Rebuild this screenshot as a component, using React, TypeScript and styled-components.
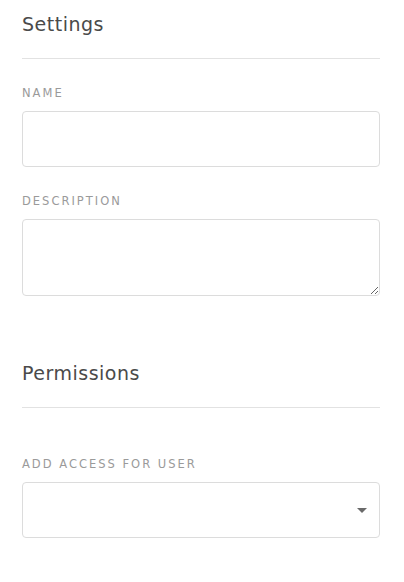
import styled, { createGlobalStyle } from "styled-components";

const GlobalStyle = createGlobalStyle`
  html, body {
    margin: 0;
    padding: 0;
    background: #ffffff;
  }
  body {
    font-family: "DejaVu Sans", "Noto Sans", sans-serif;
  }
`;

const Page = styled.div`
  padding: 12px 24px 40px 22px;
  width: 358px;
`;

const Section = styled.section<{ gap?: number }>`
  margin-top: ${({ gap }) => gap ?? 0}px;
`;

const Heading = styled.h2`
  margin: 0;
  font-size: 19px;
  font-weight: 400;
  line-height: 24px;
  letter-spacing: 0.5px;
  color: #4a4a4a;
  padding-bottom: 22px;
  border-bottom: 1px solid #e2e2e2;
`;

const Field = styled.div<{ top: number }>`
  margin-top: ${({ top }) => top}px;
  display: flex;
  flex-direction: column;
`;

const Label = styled.label`
  font-size: 11.5px;
  line-height: 14px;
  letter-spacing: 2px;
  color: #9a9a9a;
  text-transform: uppercase;
  padding-top: 2px;
  margin-bottom: 11px;
`;

const Input = styled.input`
  box-sizing: border-box;
  width: 100%;
  height: 56px;
  border: 1px solid #dcdcdc;
  border-radius: 4px;
  padding: 0 12px;
  font: inherit;
  outline: none;
`;

const TextArea = styled.textarea`
  box-sizing: border-box;
  display: block;
  width: 100%;
  height: 77px;
  border: 1px solid #dcdcdc;
  border-radius: 4px;
  padding: 10px 12px;
  font: inherit;
  outline: none;
  resize: vertical;
`;

const SelectBox = styled.div`
  position: relative;
  box-sizing: border-box;
  width: 100%;
  height: 56px;
  border: 1px solid #dcdcdc;
  border-radius: 4px;

  &::after {
    content: "";
    position: absolute;
    right: 12px;
    top: 25px;
    border-left: 5px solid transparent;
    border-right: 5px solid transparent;
    border-top: 5px solid #6a6a6a;
  }
`;

export default function App() {
  return (
    <>
      <GlobalStyle />
      <Page>
        <Section>
          <Heading>Settings</Heading>
          <Field top={25}>
            <Label>Name</Label>
            <Input type="text" />
          </Field>
          <Field top={25}>
            <Label>Description</Label>
            <TextArea />
          </Field>
        </Section>
        <Section gap={65}>
          <Heading>Permissions</Heading>
          <Field top={47}>
            <Label>Add access for user</Label>
            <SelectBox />
          </Field>
        </Section>
      </Page>
    </>
  );
}
